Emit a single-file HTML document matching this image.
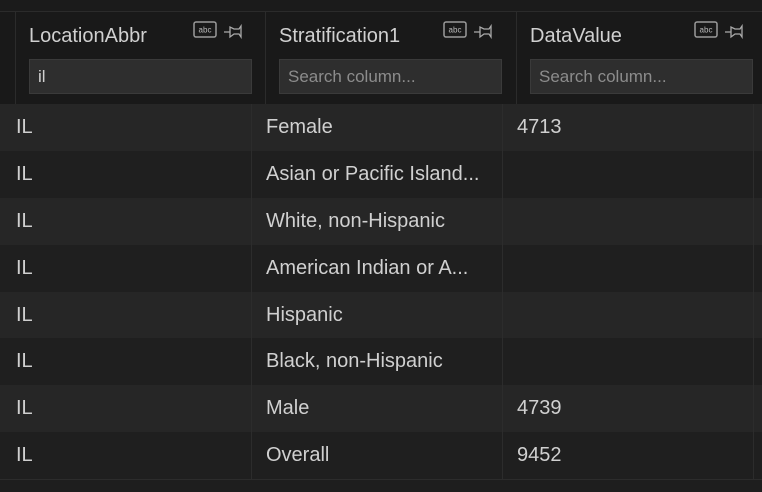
<!DOCTYPE html><html><head><style>
*{margin:0;padding:0;box-sizing:border-box}
body{width:762px;height:492px;background:#1e1e1e;font-family:"Segoe UI","Liberation Sans",sans-serif;color:#d4d4d4;overflow:hidden;position:relative}
.top{position:absolute;left:0;top:0;width:762px;height:12px;background:#1b1b1b;border-bottom:1px solid #2b2b2b}
.hdr{position:absolute;top:12px;height:92px;background:#191919;border-left:1px solid #2b2b2b}
.hdr .t{position:absolute;left:13px;top:13px;font-size:20px;color:#d0d0d0}
.hdr .in{position:absolute;left:13px;top:47px;width:223px;height:35px;background:#2e2e2e;border:1px solid #3a3a3a;font-size:17px;padding:7px 8px;color:#8c8c8c}
.hdr svg{position:absolute;top:9px;left:177px}
.row{position:absolute;left:0;width:762px;height:46.875px;font-size:20px;color:#d0d0d0}
.row span{position:absolute;top:12px}
.c{position:absolute;top:0;bottom:0;width:1px;background:#2c2c2c}
</style></head><body>
<div class="top"></div>
<div class="hdr" style="left:0;width:15px;border:none"></div>
<div class="hdr" style="left:15px;width:250px"><div class="t">LocationAbbr</div><div class="in" style="color:#d0d0d0">il</div>
<svg width="60" height="20"><rect x="1" y="1" width="22" height="15" rx="2" fill="none" stroke="#9a9a9a" stroke-width="1.5"/><text x="12" y="11.5" font-size="8" fill="#bbb" text-anchor="middle" font-family="Liberation Sans">abc</text><path d="M31 11h6M37 6v10l4-3h5l2 3V5l-2 3h-5z" fill="none" stroke="#aaa" stroke-width="1.3"/></svg></div>
<div class="hdr" style="left:265px;width:251px"><div class="t">Stratification1</div><div class="in">Search column...</div>
<svg width="60" height="20"><rect x="1" y="1" width="22" height="15" rx="2" fill="none" stroke="#9a9a9a" stroke-width="1.5"/><text x="12" y="11.5" font-size="8" fill="#bbb" text-anchor="middle" font-family="Liberation Sans">abc</text><path d="M31 11h6M37 6v10l4-3h5l2 3V5l-2 3h-5z" fill="none" stroke="#aaa" stroke-width="1.3"/></svg></div>
<div class="hdr" style="left:516px;width:246px"><div class="t">DataValue</div><div class="in">Search column...</div>
<svg width="60" height="20"><rect x="1" y="1" width="22" height="15" rx="2" fill="none" stroke="#9a9a9a" stroke-width="1.5"/><text x="12" y="11.5" font-size="8" fill="#bbb" text-anchor="middle" font-family="Liberation Sans">abc</text><path d="M31 11h6M37 6v10l4-3h5l2 3V5l-2 3h-5z" fill="none" stroke="#aaa" stroke-width="1.3"/></svg></div>

<div class="row" style="top:104px;background:#262626"><span style="left:16px">IL</span><span style="left:266px">Female</span><span style="left:517px">4713</span></div>
<div class="row" style="top:150.875px;background:#1f1f1f"><span style="left:16px">IL</span><span style="left:266px">Asian or Pacific Island...</span></div>
<div class="row" style="top:197.75px;background:#262626"><span style="left:16px">IL</span><span style="left:266px">White, non-Hispanic</span></div>
<div class="row" style="top:244.625px;background:#1f1f1f"><span style="left:16px">IL</span><span style="left:266px">American Indian or A...</span></div>
<div class="row" style="top:291.5px;background:#262626"><span style="left:16px">IL</span><span style="left:266px">Hispanic</span></div>
<div class="row" style="top:338.375px;background:#1f1f1f"><span style="left:16px">IL</span><span style="left:266px">Black, non-Hispanic</span></div>
<div class="row" style="top:385.25px;background:#262626"><span style="left:16px">IL</span><span style="left:266px">Male</span><span style="left:517px">4739</span></div>
<div class="row" style="top:432.125px;background:#1f1f1f"><span style="left:16px">IL</span><span style="left:266px">Overall</span><span style="left:517px">9452</span></div>
<div style="position:absolute;left:0;top:479px;width:762px;height:1px;background:#2c2c2c"></div>
<div class="c" style="left:251px;top:104px;height:375px"></div>
<div class="c" style="left:502px;top:104px;height:375px"></div>
<div class="c" style="left:753px;top:104px;height:375px"></div>
</body></html>
